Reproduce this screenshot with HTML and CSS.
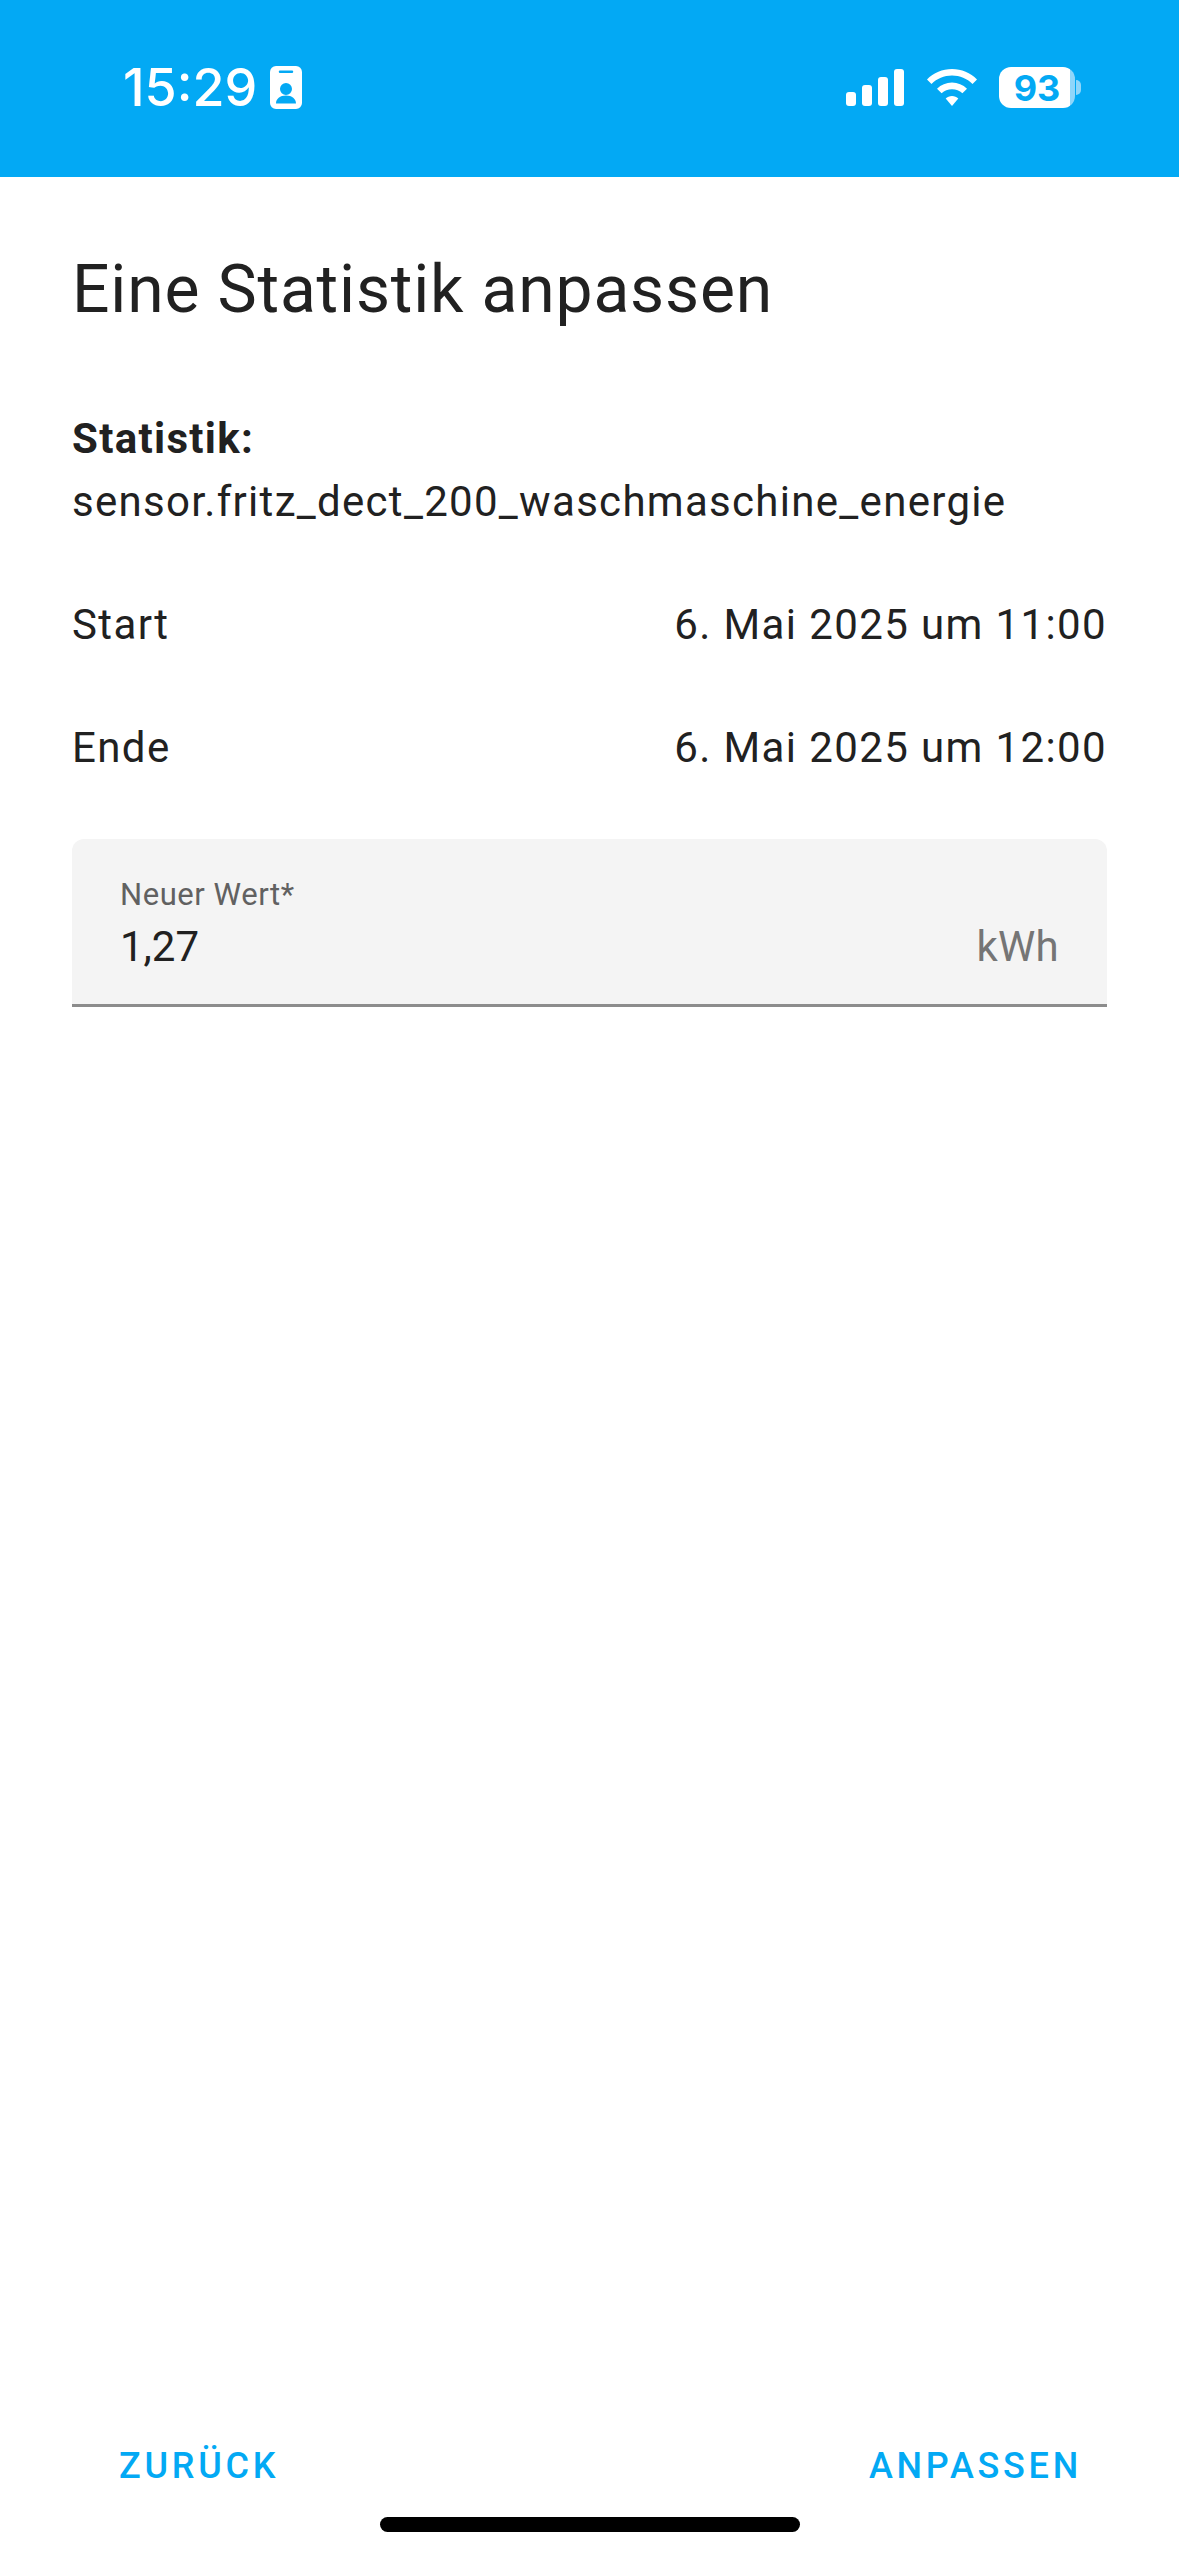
FILE: index.html
```html
<!DOCTYPE html>
<html lang="de">
<head>
    <meta charset="UTF-8">
    <meta name="viewport" content="width=device-width, initial-scale=1.0">
    <title>Eine Statistik anpassen</title>
    <link rel="stylesheet" href="styles.css">
</head>
<body>
    <div class="page">
        <header class="status-bar">
            <div class="status-left">
                <span class="clock">15:29</span>
                <svg class="badge-icon" width="32" height="43" viewBox="0 0 32 43">
                    <path fill="#fff" fill-rule="evenodd" d="M6 0H26A6 6 0 0 1 32 6V37A6 6 0 0 1 26 43H6A6 6 0 0 1 0 37V6A6 6 0 0 1 6 0ZM10 4.500A1.200 1.200 0 0 0 10 7H22A1.200 1.200 0 0 0 22 4.500ZM16 17A6 6 0 1 0 16 29A6 6 0 1 0 16 17ZM16 29.500C10 29.500 6 33 6 37.500H26C26 33 22 29.500 16 29.500Z"/>
                </svg>
            </div>
            <div class="status-right">
                <svg width="58" height="37" viewBox="0 0 58 37">
                    <rect x="0" y="23" width="10" height="14" rx="3" fill="#fff"/>
                    <rect x="16" y="16" width="10" height="21" rx="3" fill="#fff"/>
                    <rect x="32" y="8" width="10" height="29" rx="3" fill="#fff"/>
                    <rect x="48" y="0" width="10" height="37" rx="3" fill="#fff"/>
                </svg>
                <svg class="wifi-icon" width="50" height="37" viewBox="0 0 50 37">
                    <path fill="#fff" d="M25 0C34.500 0 43.500 3.800 50 10.500L45.500 15C40 9.500 33 6.500 25 6.500C17 6.500 10 9.500 4.500 15L0 10.500C6.500 3.800 15.500 0 25 0Z"/>
                    <path fill="#fff" d="M25 13.500C30.800 13.500 36 15.800 40 19.700L35.400 24.300C32.600 21.700 29 20.200 25 20.200C21 20.200 17.400 21.700 14.600 24.300L10 19.700C14 15.800 19.200 13.500 25 13.500Z"/>
                    <path fill="#fff" d="M25 27C27.500 27 29.700 28 31.300 29.500L25 37L18.700 29.500C20.300 28 22.500 27 25 27Z"/>
                </svg>
                <div class="battery">
                    <span class="battery-level">93</span>
                    <span class="battery-cap"></span>
                </div>
            </div>
        </header>

        <main class="content">
            <h1 class="title">Eine Statistik anpassen</h1>
            <div class="statistic">
                <b>Statistik:</b>
                <div>sensor.fritz_dect_200_waschmaschine_energie</div>
            </div>
            <div class="row">
                <span>Start</span>
                <span>6. Mai 2025 um 11:00</span>
            </div>
            <div class="row">
                <span>Ende</span>
                <span>6. Mai 2025 um 12:00</span>
            </div>
            <div class="field">
                <div class="field-text">
                    <div class="field-label">Neuer Wert*</div>
                    <div class="field-value">1,27</div>
                </div>
                <div class="field-unit">kWh</div>
            </div>
        </main>

        <footer class="actions">
            <span class="action">ZURÜCK</span>
            <span class="action">ANPASSEN</span>
        </footer>
        <div class="home-bar"></div>
    </div>
</body>
</html>
```

FILE: styles.css
```css
body {
    margin: 0;
    padding: 0;
    background-color: #fff;
    font-family: Roboto, "Liberation Sans", sans-serif;
    color: #212121;
}
.page {
    width: 1179px;
    height: 2556px;
    display: flex;
    flex-direction: column;
    overflow: hidden;
}
.status-bar {
    height: 177px;
    flex-shrink: 0;
    background-color: #03a9f4;
    display: flex;
    justify-content: space-between;
    align-items: flex-start;
    padding: 66px 104px 0 123px;
    box-sizing: border-box;
}
.status-left {
    display: flex;
    align-items: center;
    gap: 13px;
}
.clock {
    font-family: Inter, sans-serif;
    font-size: 52px;
    line-height: 43px;
    font-weight: 500;
    color: #fff;
}
.status-right {
    display: flex;
    align-items: center;
    gap: 23px;
    height: 43px;
}
.wifi-icon {
    margin-right: -1px;
}
.battery {
    position: relative;
    width: 76px;
    height: 41px;
    border-radius: 12px;
    background: linear-gradient(to right, #fff 93%, #8fd6fa 93%);
    display: flex;
    align-items: center;
    justify-content: center;
}
.battery-level {
    font-family: Inter, sans-serif;
    font-size: 36px;
    font-weight: 700;
    color: #03a9f4;
}
.battery-cap {
    position: absolute;
    left: 77px;
    top: 13px;
    width: 5px;
    height: 15px;
    border-radius: 0 8px 8px 0;
    background-color: #8fd6fa;
}
.content {
    padding: 0 72px;
}
.title {
    margin: 68px 0 0;
    font-size: 66px;
    line-height: 90px;
    font-weight: 400;
    letter-spacing: 0.82px;
}
.statistic {
    margin-top: 72px;
    font-size: 42px;
    line-height: 63px;
    letter-spacing: 1.3px;
}
.row {
    display: flex;
    justify-content: space-between;
    margin-top: 60px;
    font-size: 42px;
    line-height: 63px;
    letter-spacing: 1.38px;
}
.field {
    margin-top: 60px;
    height: 168px;
    box-sizing: border-box;
    background-color: #f4f4f4;
    border-bottom: 3px solid #8c8c8c;
    border-radius: 12px 12px 0 0;
    padding: 38px 48px 0 48px;
    display: flex;
    justify-content: space-between;
}
.field-label {
    font-size: 31px;
    line-height: 36px;
    letter-spacing: 0.55px;
    color: #616161;
}
.field-value {
    margin-top: 7px;
    font-size: 42px;
    line-height: 54px;
}
.field-unit {
    margin-top: 43px;
    font-size: 42px;
    line-height: 54px;
    letter-spacing: 0.3px;
    color: #757575;
}
.actions {
    margin-top: auto;
    display: flex;
    justify-content: space-between;
    padding: 0 97px 2px 119px;
}
.action {
    font-size: 36px;
    line-height: 54px;
    font-weight: 500;
    letter-spacing: 3.75px;
    color: #03a9f4;
}
.home-bar {
    flex-shrink: 0;
    width: 420px;
    height: 15px;
    margin: 22px auto 24px;
    border-radius: 8px;
    background-color: #000;
}
```
